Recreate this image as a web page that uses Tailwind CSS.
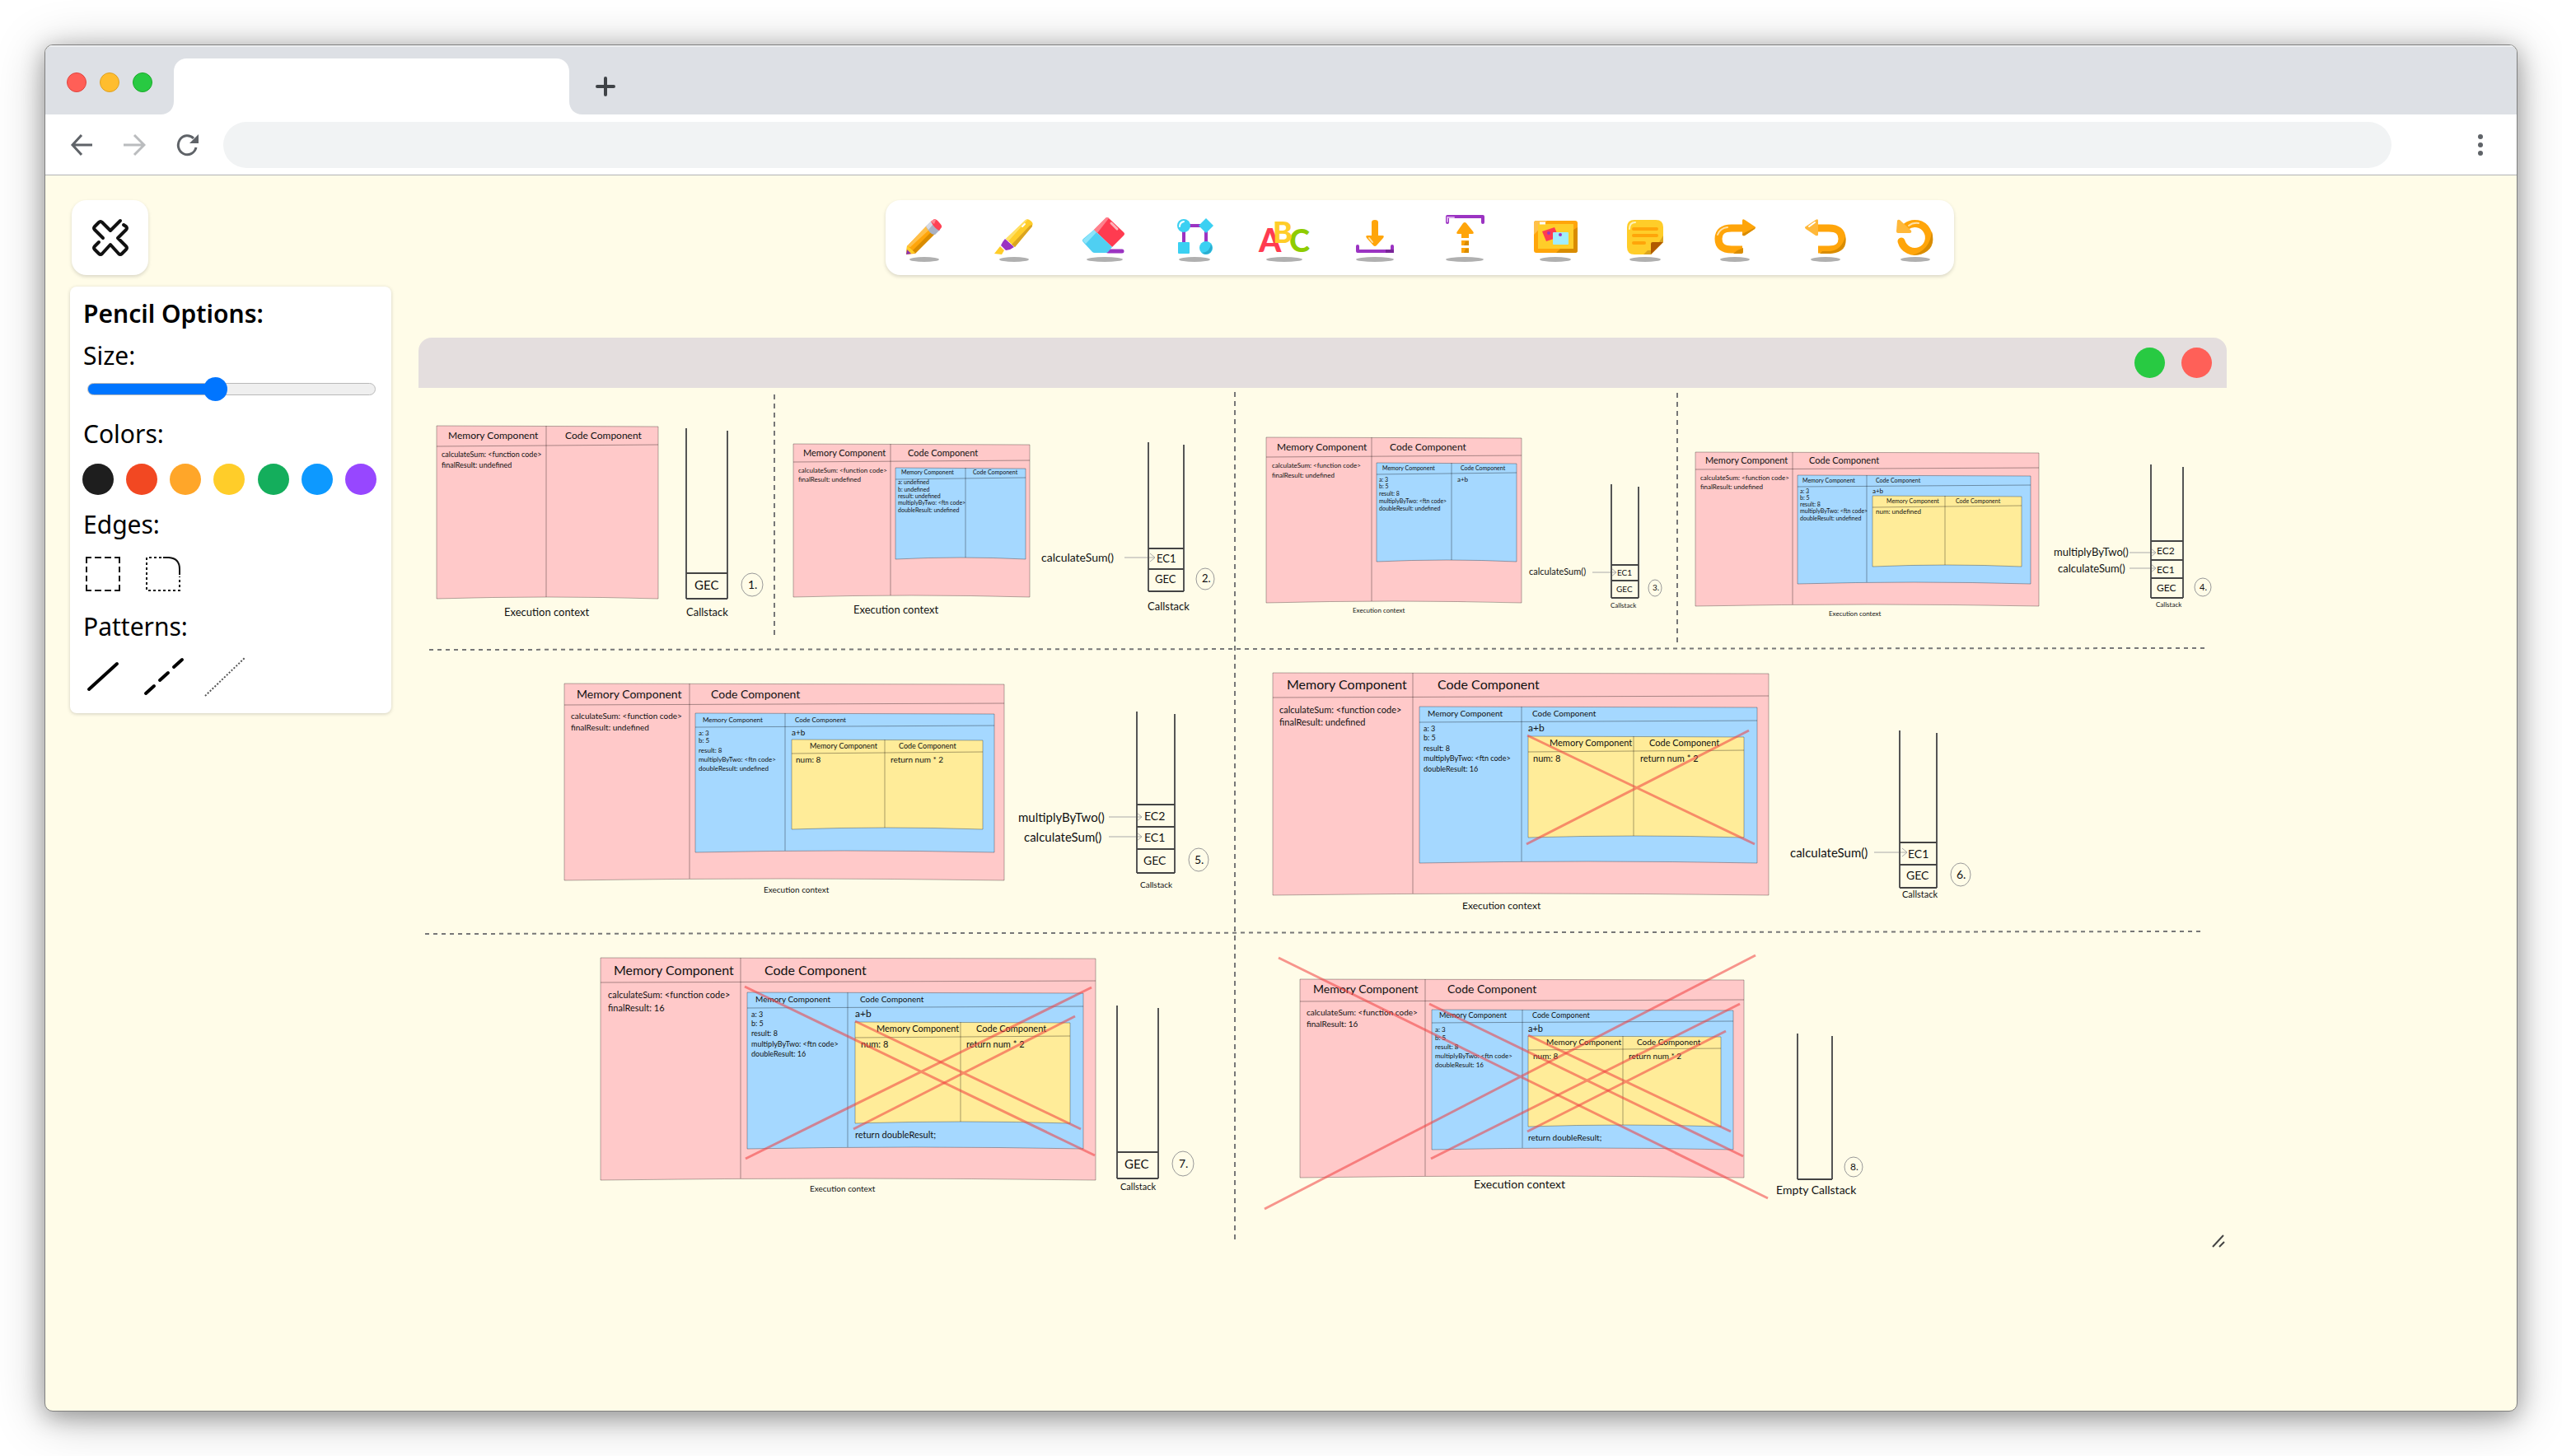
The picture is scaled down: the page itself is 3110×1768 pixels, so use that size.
<!DOCTYPE html>
<html lang="en">
<head>
<meta charset="utf-8">
<meta name="viewport" content="width=device-width, initial-scale=1">
<title>Whiteboard</title>
<script src="https://cdn.jsdelivr.net/npm/@tailwindcss/browser@4"></script>
</head>
<body class="flex min-h-screen bg-white px-[54px] pt-[54px] pb-[54px] font-['Noto_Sans',sans-serif] text-[30px] text-black">
<div class="flex flex-1 flex-col overflow-hidden rounded-[10px] border border-[#808080] bg-[#fffce8] shadow-[0_6px_28px_rgba(0,0,0,0.3),0_8px_60px_rgba(0,0,0,0.25)]">

  <!-- Tab strip -->
  <header class="flex h-[84px] items-end border-t-2 border-[#eceef0] bg-[#dde0e5]">
    <div class="flex h-full items-center gap-4 pt-1 pl-[26px]">
      <span class="size-6 rounded-full border border-[#e0443e] bg-[#ff5f57]"></span>
      <span class="size-6 rounded-full border border-[#dea123] bg-[#ffbd2e]"></span>
      <span class="size-6 rounded-full border border-[#1aab29] bg-[#28ca42]"></span>
    </div>
    <svg class="ml-[10px] h-[68px] w-[512px]" viewBox="0 0 512 68" aria-hidden="true"><path fill="#fff" d="M0 68c10 0 16-7 16-16V16C16 7 22 0 32 0h448c10 0 16 7 16 16v36c0 9 6 16 16 16z"/></svg>
    <button type="button" aria-label="New tab" class="mb-[22px] ml-4 size-6"><svg viewBox="0 0 24 24" class="size-6" stroke="#3f4347" stroke-width="4" stroke-linecap="round"><path d="M12 2v20M2 12h20"/></svg></button>
  </header>

  <!-- Address bar -->
  <nav class="flex h-[74px] items-center border-b border-[#b0b2b5] bg-white pl-[30px] text-[#5f6368]">
    <button type="button" aria-label="Back" class="h-7 w-7"><svg viewBox="0 0 28 28" class="size-7" fill="none" stroke="currentColor" stroke-width="3"><path d="M14 2 3 14l11 12M3 14h24"/></svg></button>
    <button type="button" aria-label="Forward" class="ml-9 h-7 w-7 text-[#babcbe]"><svg viewBox="0 0 28 28" class="size-7" fill="none" stroke="currentColor" stroke-width="3"><path d="m14 2 12 12-12 12M26 14H1"/></svg></button>
    <button type="button" aria-label="Reload" class="ml-9 h-7 w-7"><svg viewBox="0 0 28 28" class="size-7" fill="none" stroke="currentColor" stroke-width="3"><path d="M25 17A11 11.500 0 1 1 22 6"/><path fill="currentColor" stroke="none" d="M28 1v11H17z"/></svg></button>
    <input type="text" aria-label="Address" class="ml-[30px] h-14 min-w-0 flex-1 rounded-full bg-[#f1f3f4] px-8 outline-none">
    <button type="button" aria-label="Menu" class="mr-[30px] ml-[94px] h-7 w-7"><svg viewBox="0 0 28 28" class="size-7" fill="currentColor"><circle cx="14" cy="4" r="3"/><circle cx="14" cy="14" r="3"/><circle cx="14" cy="24" r="3"/></svg></button>
  </nav>

  <!-- Whiteboard -->
  <main class="flex items-start gap-[33px] pt-[30px] pl-[30px]">
    <aside class="w-[390px] shrink-0">
      <button type="button" aria-label="Close menu" class="ml-[2px] flex h-[91px] w-[93px] items-center justify-center rounded-[18px] bg-white shadow-[0_2px_4px_rgba(0,0,0,0.15)]">
        <svg viewBox="0 0 44 44" class="size-11 overflow-visible" fill="none" stroke="#111" stroke-width="4" stroke-linecap="round" stroke-linejoin="round"><path d="M34 1 22 13 12 3q-2-2-4 0L3 8q-2 2 0 4l10 10M8 27l-5 5q-2 2 0 4l5 5q2 2 4 0l10-11 10 11q2 2 4 0l5-5q2-2 0-4L31 22l10-10q2-2 0-4l-3-2"/></svg>
      </button>

      <form class="mt-[14px] rounded-lg bg-white pt-3 pr-[18px] pb-[23px] pl-4 shadow-[0_1px_4px_rgba(0,0,0,0.18)]">
        <h2 class="text-[30px] leading-[42px] font-semibold">Pencil Options:</h2>
        <label for="size" class="mt-[9px] block leading-[42px]">Size:</label>
        <input id="size" type="range" min="0" max="100" value="44" class="mt-3 ml-[5px] block h-[15px] w-[350px] appearance-none rounded-full border border-[#b9b9b9] bg-[linear-gradient(to_right,#0075ff_45%,#efefef_45%)] [&::-webkit-slider-thumb]:size-[29px] [&::-webkit-slider-thumb]:appearance-none [&::-webkit-slider-thumb]:rounded-full [&::-webkit-slider-thumb]:bg-[#0075ff]">
        <h3 class="mt-[26px] leading-[42px]">Colors:</h3>
        <div class="mt-[15px] -ml-px flex justify-between">
          <button type="button" aria-label="Black" class="size-[38px] rounded-full bg-[#1e1e1e]"></button>
          <button type="button" aria-label="Red" class="size-[38px] rounded-full bg-[#f24822]"></button>
          <button type="button" aria-label="Orange" class="size-[38px] rounded-full bg-[#ffa629]"></button>
          <button type="button" aria-label="Yellow" class="size-[38px] rounded-full bg-[#ffcd29]"></button>
          <button type="button" aria-label="Green" class="size-[38px] rounded-full bg-[#14ae5c]"></button>
          <button type="button" aria-label="Blue" class="size-[38px] rounded-full bg-[#0d99ff]"></button>
          <button type="button" aria-label="Purple" class="size-[38px] rounded-full bg-[#9747ff]"></button>
        </div>
        <h3 class="mt-[15px] leading-[42px]">Edges:</h3>
        <div class="mt-[15px] flex gap-[25px]">
          <button type="button" aria-label="Sharp edges"><svg viewBox="0 0 48 48" class="size-12" fill="none" stroke="#111" stroke-width="2"><path stroke-dasharray="7 4 8 4 8 4 7 0" d="M3 4h42M3 44h42"/><path stroke-dasharray="7 4 7 4 7 4 7 0" d="M4 4v40M44 4v40"/></svg></button>
          <button type="button" aria-label="Round edges"><svg viewBox="0 0 48 48" class="size-12" fill="none" stroke="#111" stroke-width="2"><path d="M24 4h7q13 1 13 14v7"/><path stroke-dasharray="3 3" d="M22 4H4v40h40V27"/></svg></button>
        </div>
        <h3 class="mt-[19px] leading-[42px]">Patterns:</h3>
        <div class="mt-[13px] flex gap-[25px]">
          <button type="button" aria-label="Solid"><svg viewBox="0 0 48 48" class="size-12" stroke="#000" stroke-width="4" stroke-linecap="round"><path d="M7 42 41 11"/></svg></button>
          <button type="button" aria-label="Dashed"><svg viewBox="0 0 48 48" class="size-12 overflow-visible" stroke="#000" stroke-width="4" stroke-linecap="round"><path d="m3 47 10-9M20 31l10-9M37 15l10-9"/></svg></button>
          <button type="button" aria-label="Dotted"><svg viewBox="0 0 48 48" class="size-12 overflow-visible" stroke="#555" stroke-width="2" stroke-dasharray="2 2"><path d="M2 50 51 3"/></svg></button>
        </div>
      </form>
    </aside>

    <section class="min-w-0 flex-1">
      <!-- Tools -->
      <div class="ml-[567px] flex h-[91px] w-[1297px] max-w-full items-center justify-between rounded-[18px] bg-white px-[19px] shadow-[0_2px_4px_rgba(0,0,0,0.15)]">
        <button type="button" aria-label="Pencil"><svg viewBox="0 0 56 60" class="h-[60px] w-14">
          <ellipse cx="28" cy="56" rx="18" ry="3" fill="#b0b0b0"/>
          <path fill="#ffa50a" d="M31 15 7 40 6 50l10-1 26-26z"/><path fill="#ffc04a" d="M31 15 7 40l4 1 24-22z"/><path fill="#d98c00" d="m39 20 4 3-26 26-4-3z"/>
          <path fill="#ffcd29" d="m7 39 10 9-11 2z"/><path fill="#8a2fb0" d="m7 44 5 5-6 1z"/>
          <path fill="#aab2c4" d="m30 16 6-6 11 10-6 6q-6 0-11-10z"/><path fill="#d5d9e4" d="m30 16 6-6 3 3-6 7z"/>
          <path fill="#ff4255" d="m36 10 4-3q3 0 6 4 4 4 3 6l-3 4q-6-3-10-11z"/><path fill="#ff8792" d="m36 10 4-3 2 1-2 5z"/></svg></button>
        <button type="button" aria-label="Marker"><svg viewBox="0 0 56 60" class="h-[60px] w-14">
          <ellipse cx="28" cy="56" rx="18" ry="3" fill="#b0b0b0"/>
          <path fill="#ffcd29" d="m18 31 24-23q3-2 6 1 4 3 2 6L29 41z"/><path fill="#ffe066" d="m18 31 24-23 3-1-24 27z"/><path fill="#dba51f" d="m47 15 3-1v2L29 41l-4-3z"/><path stroke="#fff" stroke-width="2" stroke-linecap="round" d="m38 16 3-3"/>
          <path fill="#9b33c2" d="m17 31 11 10-5 3-5 1-6-6 2-4z"/><path fill="#ffcd29" d="m11 40 5 5-3 5-9-1z"/></svg></button>
        <button type="button" aria-label="Eraser"><svg viewBox="0 0 56 60" class="h-[60px] w-14">
          <ellipse cx="28" cy="56" rx="22" ry="3" fill="#b0b0b0"/>
          <path stroke="#9b33c2" stroke-width="5" stroke-linecap="round" d="M32 46h17"/>
          <path fill="#ff3b50" d="M15 20 29 6q2-2 4 0l18 17q2 2 0 4L37 41z"/><path fill="#4fcff2" d="m15 20 22 21-5 6q-1 1-3 1H16q-2 0-3-1L2 35q-2-2 0-4z"/>
          <path fill="#8ce4fa" d="m15 20 3 3L5 37l-3-3q-1-2 1-3z"/><path fill="#ff808c" d="M15 20 29 6q2-2 4 0l-14 18z"/><path stroke="#ffb3ba" stroke-width="3" stroke-linecap="round" d="m36 12 7 7"/></svg></button>
        <button type="button" aria-label="Shapes"><svg viewBox="0 0 56 60" class="h-[60px] w-14">
          <ellipse cx="28" cy="56" rx="19" ry="3" fill="#b0b0b0"/>
          <path fill="none" stroke="#9b33c2" stroke-width="4" d="M15 40V15h27v25"/>
          <circle cx="15" cy="15" r="8" fill="#3bd0f2"/><path fill="none" stroke="#fff" stroke-width="2" stroke-linecap="round" d="M10 16q0-5 5-6"/><rect x="8" y="35" width="14" height="14" rx="1" fill="#3bd0f2"/><path fill="#3bd0f2" d="m42 6 9 9-9 9-9-9z"/><circle cx="42" cy="42" r="8" fill="#3bd0f2"/><path fill="#2aaed0" d="M48 37q4 8-3 12-5 2-8-1 10-1 11-11z"/></svg></button>
        <button type="button" aria-label="Text"><svg viewBox="0 0 56 60" class="h-[60px] w-14 overflow-visible font-['Lato',sans-serif] font-black">
          <ellipse cx="28" cy="56" rx="22" ry="3" fill="#b0b0b0"/>
          <text x="-3" y="47" font-size="39" fill="#ff3b50">A</text><text x="34" y="47" font-size="38" fill="#8fcc00">C</text><text x="14" y="36" font-size="36" fill="#ffcd29">B</text></svg></button>
        <button type="button" aria-label="Download"><svg viewBox="0 0 56 60" class="h-[60px] w-14">
          <ellipse cx="28" cy="56" rx="23" ry="3" fill="#b0b0b0"/>
          <path fill="none" stroke="#9b33c2" stroke-width="4" stroke-linecap="round" stroke-linejoin="round" d="M7 40v6h42v-6"/><path stroke="#7a2599" stroke-width="4" d="M41 46h10"/>
          <path fill="#ffa50a" d="M24 11q0-3 4-3t4 3v16h5q3 0 1 3l-8 9q-2 2-4 0l-8-9q-2-3 1-3h5z"/><path stroke="#ffe0a8" stroke-width="2" stroke-linecap="round" d="m21 30 4 5"/></svg></button>
        <button type="button" aria-label="Upload"><svg viewBox="0 0 56 60" class="h-[60px] w-14">
          <ellipse cx="28" cy="56" rx="23" ry="3" fill="#b0b0b0"/>
          <path fill="none" stroke="#9b33c2" stroke-width="4" stroke-linecap="round" stroke-linejoin="round" d="M7 11V4h43v7"/><path stroke="#d9a8ea" stroke-width="2" stroke-linecap="round" fill="none" d="M7 10V5h8"/>
          <path fill="#ffa50a" d="M26 12q2-2 4 0l8 10q2 3-1 3h-4v5h-9v-5h-4q-3 0-1-3zM24 33h9v6h-9zM24 42h9v6h-9z"/><path fill="#d98c00" d="M29 34h4v5h-6zM29 43h4v5h-6z"/></svg></button>
        <button type="button" aria-label="Image"><svg viewBox="0 0 56 60" class="h-[60px] w-14">
          <ellipse cx="28" cy="56" rx="19" ry="3" fill="#b0b0b0"/>
          <rect x="2" y="9" width="53" height="39" rx="3" fill="#ffa50a"/><path fill="#ffc04a" d="M5 9h13L2 26V12q0-3 3-3z"/><path fill="#d98c00" d="m55 17-5 3v23H34l-5 5h23q3 0 3-3z"/>
          <rect x="7" y="13" width="43" height="30" fill="#ffcd29"/><path stroke="#fff" stroke-width="3" d="M9 12h7"/>
          <path fill="#ff3b50" d="m12 22 15-5 5 12-15 5z"/><rect x="25" y="23" width="19" height="15" rx="1" fill="#a0edff"/><circle cx="20" cy="24" r="2" fill="#9b33c2"/><circle cx="34" cy="26" r="2" fill="#9b33c2"/></svg></button>
        <button type="button" aria-label="Note"><svg viewBox="0 0 56 60" class="h-[60px] w-14">
          <ellipse cx="28" cy="56" rx="19" ry="3" fill="#b0b0b0"/>
          <path fill="#ffcd29" d="M15 8h26q9 0 9 9v18L35 50H15q-9 0-9-9V17q0-9 9-9z"/><path fill="#dba51f" d="m50 27-5 8h5zM26 50l5-5h4v5z"/>
          <path fill="#b05a00" d="M35 50V37q0-2 2-2h13z"/><path fill="none" stroke="#fff2b8" stroke-width="2" stroke-linecap="round" d="M9 19q0-8 7-8"/>
          <path stroke="#ffa50a" stroke-width="4" stroke-linecap="round" d="M14 19h28M14 27h28M14 36h13"/></svg></button>
        <button type="button" aria-label="Redo"><svg viewBox="0 0 56 60" class="h-[60px] w-14">
          <ellipse cx="28" cy="56" rx="18" ry="3" fill="#b0b0b0"/>
          <path fill="none" stroke="#ffa50a" stroke-width="9" d="M40 18H24q-16 0-16 13t16 13h13"/><path fill="#ffa50a" d="M37 9q0-3 3-1l12 8q2 1 0 3l-12 8q-3 1-3-1z"/><path fill="#d98c00" d="m53 17-1 2-12 8q-3 1-3-2zM38 42v5q0 2-3 2h-9l5-4z"/>
          <path fill="none" stroke="#ffe0a8" stroke-width="2" stroke-linecap="round" d="M7 26q3-8 12-9"/></svg></button>
        <button type="button" aria-label="Undo"><svg viewBox="0 0 56 60" class="h-[60px] w-14">
          <ellipse cx="28" cy="56" rx="18" ry="3" fill="#b0b0b0"/>
          <path fill="none" stroke="#ffa50a" stroke-width="9" d="M16 18h16q16 0 16 13T32 44H19"/><path fill="#ffb83a" d="M19 9q0-3-3-1L4 16q-2 1 0 3l12 8q3 1 3-1z"/><path fill="#d98c00" d="M52 28q4 19-18 21H21l3-3h10q14-2 18-18z"/>
          <path stroke="#fff" stroke-width="2" stroke-linecap="round" d="m8 16 7-5"/></svg></button>
        <button type="button" aria-label="Reset"><svg viewBox="0 0 56 60" class="h-[60px] w-14">
          <ellipse cx="28" cy="56" rx="18" ry="3" fill="#b0b0b0"/>
          <path fill="none" stroke="#ffa50a" stroke-width="9" stroke-linecap="round" d="M11 34a17 17 0 1 0 6-18"/><path fill="#ffb83a" d="M6 9q1-2 3-1l14 13q1 3-2 3H7q-2 0-2-2z"/><path fill="#d98c00" d="M48 22q6 22-14 28l-10 1q22-6 24-29z"/>
          <path fill="none" stroke="#ffe0a8" stroke-width="2" stroke-linecap="round" d="M20 15q5-4 12-3"/></svg></button>
      </div>

      <!-- Image window placed on the board -->
      <article class="mt-[76px] w-[2195px] max-w-full">
        <div class="flex h-[61px] items-center justify-end gap-5 rounded-t-2xl bg-[#e4dede] pr-[18px]">
          <button type="button" aria-label="Expand" class="size-[37px] rounded-full bg-[#28ca42]"></button>
          <button type="button" aria-label="Close" class="size-[37px] rounded-full bg-[#ff6058]"></button>
        </div>
        <svg id="board" viewBox="508 471 2195 1050" class="block h-auto w-full font-['Lato',sans-serif]" fill="none" role="img" aria-label="JavaScript execution context in eight steps"></svg>
      </article>
    </section>
  </main>
</div>

<script>
const out = [];
const esc = s => s.replace(/&/g, '&amp;').replace(/</g, '&lt;');
const text = (x, y, size, s) => out.push(`<text x="${x}" y="${y}" font-size="${size}" fill="#111">${esc(s)}</text>`);
const path = (d, stroke, width, extra = '') => out.push(`<path d="${d}" stroke="${stroke}" stroke-width="${width}" ${extra}/>`);

// A two-column sheet: box edges, divider x, header rule y
function sheet(fill, x1, y1, x2, y2, div, rule) {
  const m = (x1 + x2) / 2;
  out.push(`<path d="M${x1} ${y1}L${x2} ${y1 + 1}V${y2}Q${m} ${y2 - 4} ${x1} ${y2}Z" fill="${fill}" stroke="#000" stroke-opacity=".3"/>`);
  path(`M${div} ${y1}V${y2 - 2}M${x1} ${rule + 1}L${x2} ${rule - 1}`, '#000', 1, 'stroke-opacity=".35"');
}
const PINK = '#ffc9c9', BLUE = '#a5d8ff', YELLOW = '#ffec99';

function heads(y, size, xa, xb) {
  text(xa, y, size, 'Memory Component');
  text(xb, y, size, 'Code Component');
}
function lines(x, size, rows) { rows.forEach(([y, s]) => text(x, y, size, s)); }

// Call stack: rails, cell rules, cell labels [x, baseline, text]
function stack(x1, x2, top, bottom, rules, size, cells) {
  path(`M${x1} ${top}V${bottom}M${x2} ${top + 3}V${bottom}`, '#555', 2);
  path([...rules, bottom].map(y => `M${x1} ${y}H${x2}`).join(''), '#444', 2);
  cells.forEach(([x, y, s]) => text(x, y, size, s));
}
function step(cx, cy, rx, ry, size, s) {
  out.push(`<ellipse cx="${cx}" cy="${cy}" rx="${rx}" ry="${ry}" stroke="#999"/>`);
  text(cx - Math.round(size / 3), cy + Math.round(size / 3), size, s);
}
const arrow = (x1, x2, y) => path(`M${x1} ${y}H${x2}M${x2 - 6} ${y - 5}L${x2} ${y}L${x2 - 6} ${y + 5}`, '#aaa', 1);
const cross = (...pts) => path(`M${pts[0]} ${pts[1]}L${pts[2]} ${pts[3]}M${pts[4]} ${pts[5]}L${pts[6]} ${pts[7]}`, '#f03e3e', 3, 'stroke-opacity=".55"');

// Dashed separators
path('M521 789L2680 787M516 1134L2674 1131', '#777', 2, 'stroke-dasharray="5 5"');
path('M940 479V773M1499 476V1508M2036 477V780', '#777', 2, 'stroke-dasharray="6 5"');

// 1
sheet(PINK, 530, 517, 799, 727, 663, 541); heads(533, 12, 544, 686);
lines(536, 9, [[555, 'calculateSum: <function code>'], [568, 'finalResult: undefined']]);
stack(833, 883, 520, 727, [696], 15, [[843, 716, 'GEC']]);
step(913, 710, 13, 14, 14, '1.'); text(612, 748, 13, 'Execution context'); text(833, 748, 13, 'Callstack');

// 2
sheet(PINK, 963, 539, 1250, 725, 1081, 560); heads(554, 11, 975, 1102);
lines(969, 8, [[574, 'calculateSum: <function code>'], [585, 'finalResult: undefined']]);
sheet(BLUE, 1087, 568, 1245, 679, 1172, 581); heads(576, 7, 1094, 1181);
lines(1090, 7, [[588, 'a: undefined'], [597, 'b: undefined'], [605, 'result: undefined'], [613, 'multiplyByTwo: <ftn code>'], [622, 'doubleResult: undefined']]);
text(1264, 682, 14, 'calculateSum()'); arrow(1365, 1402, 677);
stack(1394, 1437, 537, 718, [666, 691], 13, [[1404, 683, 'EC1'], [1402, 708, 'GEC']]);
step(1463, 703, 11, 13, 13, '2.'); text(1036, 745, 13, 'Execution context'); text(1393, 741, 13, 'Callstack');

// 3
sheet(PINK, 1537, 531, 1847, 732, 1665, 554); heads(547, 12, 1550, 1687);
lines(1544, 8, [[568, 'calculateSum: <function code>'], [580, 'finalResult: undefined']]);
sheet(BLUE, 1671, 562, 1841, 682, 1762, 575); heads(571, 7, 1678, 1773);
lines(1674, 7, [[585, 'a: 3'], [593, 'b: 5'], [602, 'result: 8'], [611, 'multiplyByTwo: <ftn code>'], [620, 'doubleResult: undefined']]);
text(1769, 585, 8, 'a+b'); text(1856, 698, 11, 'calculateSum()'); arrow(1933, 1962, 695);
stack(1956, 1989, 588, 726, [686, 705], 10, [[1963, 699, 'EC1'], [1962, 719, 'GEC']]);
step(2009, 714, 8, 10, 10, '3.'); text(1642, 744, 8, 'Execution context'); text(1955, 738, 8, 'Callstack');

// 4
sheet(PINK, 2058, 549, 2475, 736, 2176, 569); heads(563, 11, 2070, 2196);
lines(2064, 8, [[583, 'calculateSum: <function code>'], [594, 'finalResult: undefined']]);
sheet(BLUE, 2182, 577, 2465, 709, 2266, 590); heads(586, 7, 2188, 2277);
lines(2185, 7, [[599, 'a: 3'], [607, 'b: 5'], [615, 'result: 8'], [623, 'multiplyByTwo: <ftn code>'], [632, 'doubleResult: undefined']]);
text(2273, 599, 8, 'a+b');
sheet(YELLOW, 2273, 602, 2454, 688, 2361, 615); heads(611, 7, 2290, 2374); text(2277, 624, 8, 'num: undefined');
text(2493, 675, 13, 'multiplyByTwo()'); arrow(2585, 2617, 671);
text(2498, 695, 13, 'calculateSum()'); arrow(2585, 2617, 690);
stack(2611, 2650, 564, 726, [657, 680, 702], 12, [[2618, 673, 'EC2'], [2618, 696, 'EC1'], [2618, 718, 'GEC']]);
step(2674, 713, 10, 11, 11, '4.'); text(2220, 748, 8, 'Execution context'); text(2617, 737, 8, 'Callstack');

// 5
sheet(PINK, 685, 830, 1219, 1069, 837, 855); heads(848, 14, 700, 863);
lines(693, 10, [[873, 'calculateSum: <function code>'], [887, 'finalResult: undefined']]);
sheet(BLUE, 844, 866, 1207, 1035, 953, 882); heads(877, 8, 853, 965);
lines(848, 8, [[893, 'a: 3'], [902, 'b: 5'], [914, 'result: 8'], [925, 'multiplyByTwo: <ftn code>'], [936, 'doubleResult: undefined']]);
text(961, 893, 10, 'a+b');
sheet(YELLOW, 961, 898, 1193, 1007, 1074, 914); heads(909, 9, 983, 1091);
text(966, 926, 10, 'num: 8'); text(1081, 926, 10, 'return num * 2');
text(1236, 998, 15, 'multiplyByTwo()'); arrow(1346, 1386, 992);
text(1243, 1022, 15, 'calculateSum()'); arrow(1346, 1386, 1016);
stack(1380, 1426, 864, 1060, [977, 1004, 1031], 14, [[1389, 996, 'EC2'], [1389, 1022, 'EC1'], [1388, 1050, 'GEC']]);
step(1455, 1044, 12, 14, 14, '5.'); text(927, 1084, 10, 'Execution context'); text(1384, 1078, 10, 'Callstack');

// 6
sheet(PINK, 1545, 817, 2147, 1087, 1715, 846); heads(837, 16, 1562, 1745);
lines(1553, 11, [[866, 'calculateSum: <function code>'], [881, 'finalResult: undefined']]);
sheet(BLUE, 1723, 858, 2133, 1048, 1847, 876); heads(870, 10, 1733, 1860);
lines(1728, 9, [[888, 'a: 3'], [899, 'b: 5'], [912, 'result: 8'], [924, 'multiplyByTwo: <ftn code>'], [937, 'doubleResult: 16']]);
text(1855, 888, 12, 'a+b');
sheet(YELLOW, 1855, 894, 2117, 1017, 1983, 912); heads(906, 11, 1881, 2002);
text(1861, 925, 11, 'num: 8'); text(1991, 925, 11, 'return num * 2');
cross(1854, 893, 2130, 1025, 2123, 887, 1853, 1025);
text(2173, 1041, 15, 'calculateSum()'); arrow(2275, 2315, 1035);
stack(2306, 2351, 887, 1078, [1023, 1050], 14, [[2316, 1042, 'EC1'], [2314, 1068, 'GEC']]);
step(2380, 1062, 12, 14, 14, '6.'); text(1775, 1104, 12, 'Execution context'); text(2309, 1090, 11, 'Callstack');

// 7
sheet(PINK, 729, 1163, 1330, 1433, 899, 1192); heads(1184, 16, 745, 928);
lines(738, 11, [[1212, 'calculateSum: <function code>'], [1228, 'finalResult: 16']]);
sheet(BLUE, 907, 1205, 1315, 1395, 1029, 1223); heads(1217, 10, 917, 1044);
lines(912, 9, [[1235, 'a: 3'], [1246, 'b: 5'], [1258, 'result: 8'], [1271, 'multiplyByTwo: <ftn code>'], [1283, 'doubleResult: 16']]);
text(1038, 1235, 12, 'a+b');
sheet(YELLOW, 1038, 1241, 1299, 1364, 1166, 1259); heads(1253, 11, 1064, 1185);
text(1045, 1272, 11, 'num: 8'); text(1173, 1272, 11, 'return num * 2'); text(1038, 1382, 11, 'return doubleResult;');
cross(1038, 1240, 1312, 1371, 1305, 1234, 1036, 1371);
cross(904, 1198, 1329, 1403, 1325, 1199, 905, 1407);
stack(1356, 1406, 1221, 1431, [1399], 15, [[1365, 1419, 'GEC']]);
step(1436, 1413, 13, 15, 14, '7.'); text(983, 1447, 10, 'Execution context'); text(1360, 1445, 11, 'Callstack');

// 8
sheet(PINK, 1578, 1189, 2117, 1430, 1730, 1215); heads(1206, 14, 1594, 1757);
lines(1586, 10, [[1233, 'calculateSum: <function code>'], [1247, 'finalResult: 16']]);
sheet(BLUE, 1738, 1226, 2104, 1396, 1848, 1241); heads(1236, 9, 1747, 1860);
lines(1742, 8, [[1253, 'a: 3'], [1263, 'b: 5'], [1274, 'result: 8'], [1285, 'multiplyByTwo: <ftn code>'], [1296, 'doubleResult: 16']]);
text(1855, 1253, 11, 'a+b');
sheet(YELLOW, 1855, 1258, 2089, 1368, 1970, 1274); heads(1269, 10, 1877, 1987);
text(1861, 1286, 10, 'num: 8'); text(1977, 1286, 10, 'return num * 2'); text(1855, 1385, 10, 'return doubleResult;');
cross(1855, 1257, 2101, 1374, 2095, 1252, 1854, 1374);
cross(1735, 1219, 2116, 1404, 2112, 1219, 1737, 1407);
cross(1552, 1163, 2146, 1455, 2131, 1160, 1535, 1468);
stack(2182, 2224, 1255, 1432, [], 14, []);
step(2250, 1417, 11, 12, 12, '8.'); text(1789, 1443, 14, 'Execution context'); text(2156, 1450, 14, 'Empty Callstack');

// Resize grip
path('M2686 1514L2699 1500M2694 1514L2700 1508', '#444', 2);

document.getElementById('board').innerHTML = out.join('');
</script>
</body>
</html>
